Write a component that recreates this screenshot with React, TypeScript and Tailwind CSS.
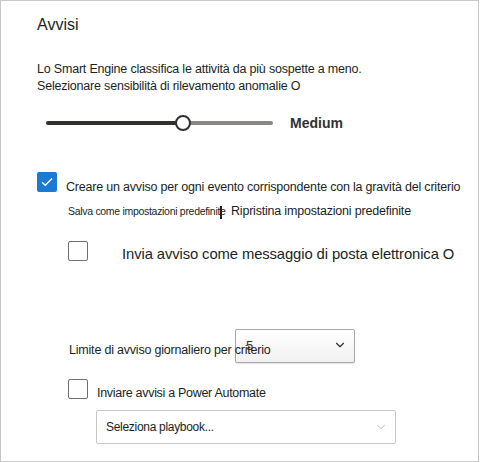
import { ChevronDown } from "lucide-react";

const font = { fontFamily: '"Liberation Sans", Arial, sans-serif' };

export default function App() {
  return (
    <div
      className="w-[479px] h-[462px] border border-[#c8c8c8] bg-white text-[#201f1e] overflow-hidden"
      style={font}
    >
      <div className="pl-[36px] pt-[14px]">
        {/* Title */}
        <h1 className="text-[16px] leading-[20px] text-[#201f1e]">Avvisi</h1>

        {/* Description */}
        <p className="mt-[26px] text-[12.5px] leading-[17px] tracking-[-0.2px]">
          Lo Smart Engine classifica le attività da più sospette a meno.
          <br />
          Selezionare sensibilità di rilevamento anomalie O
        </p>

        {/* Slider */}
        <div className="mt-[20px] flex items-center h-[16px]">
          <div className="ml-[9px] relative w-[227px] h-[16px] flex items-center">
            <div className="h-[4px] w-[137px] bg-[#323130] rounded-l-full" />
            <div className="h-[4px] flex-1 bg-[#8a8886] rounded-r-full" />
            <div className="absolute left-[129px] top-0 w-[16px] h-[16px] rounded-full bg-white border-2 border-[#323130]" />
          </div>
          <span className="ml-[17px] text-[14px] font-bold text-[#323130]">Medium</span>
        </div>

        {/* Checked checkbox */}
        <div className="mt-[41px] flex items-start">
          <div className="w-[20px] h-[20px] rounded-[2px] bg-[#1a7ad4] flex items-center justify-center">
            <svg width="12" height="10" viewBox="0 0 12 10" fill="none">
              <path d="M1 5.2 L4.3 8.3 L11 1.5" stroke="white" strokeWidth="1.3" />
            </svg>
          </div>
          <span className="ml-[9px] mt-[8px] text-[12.5px] leading-[15px] tracking-[-0.2px]">
            Creare un avviso per ogni evento corrispondente con la gravità del criterio
          </span>
        </div>

        {/* Save / restore defaults */}
        <div className="mt-[9px] ml-[31px] flex items-start h-[18px]">
          <span className="w-[152px] whitespace-nowrap text-[10.5px] leading-[13px] tracking-[-0.3px] mt-[1px]">
            Salva come impostazioni predefinite
          </span>
          <span className="w-[2px] h-[13px] bg-[#201f1e] mt-[2px]" />
          <span className="ml-[9px] text-[12.5px] leading-[15px] tracking-[-0.2px] whitespace-nowrap">
            Ripristina impostazioni predefinite
          </span>
        </div>

        {/* Email checkbox */}
        <div className="mt-[19px] ml-[31px] flex items-start h-[20px]">
          <div className="w-[20px] h-[20px] rounded-[2px] border border-[#6e6e6e] bg-white" />
          <span className="ml-[34px] mt-[4px] text-[14.8px] leading-[18px] tracking-[-0.1px] whitespace-nowrap">
            Invia avviso come messaggio di posta elettronica O
          </span>
        </div>

        {/* Daily limit */}
        <div className="mt-[68px] ml-[32px] flex items-start">
          <span className="relative z-10 w-[166px] mt-[14px] whitespace-nowrap text-[12.5px] leading-[15px] tracking-[-0.2px]">
            Limite di avviso giornaliero per criterio
          </span>
          <div className="w-[120px] h-[34px] border border-[#a8a8a8] rounded-[2px] bg-gradient-to-b from-white to-[#f1f1f1] shadow-[0_1px_1px_rgba(0,0,0,0.12)] flex items-start justify-between pl-[10px] pr-[7px] pt-[8px]">
            <span className="text-[13px] leading-[15px] text-[#323130]">5</span>
            <ChevronDown className="w-[14px] h-[14px] text-[#323130]" strokeWidth={2} />
          </div>
        </div>

        {/* Power Automate */}
        <div className="mt-[16px] ml-[31px] flex items-start">
          <div className="w-[20px] h-[20px] rounded-[2px] border border-[#6e6e6e] bg-white" />
          <span className="ml-[9px] mt-[7px] text-[12.5px] leading-[15px] tracking-[-0.3px]">
            Inviare avvisi a Power Automate
          </span>
        </div>

        <div className="mt-[9px] ml-[59px] w-[300px] h-[34px] border border-[#c8c8c8] rounded-[2px] flex items-center justify-between pl-[9px] pr-[7px]">
          <span className="text-[12px] leading-[15px] tracking-[-0.3px] mt-[1px]">Seleziona playbook...</span>
          <ChevronDown className="w-[14px] h-[14px] text-[#b3b3b3]" strokeWidth={1.5} />
        </div>
      </div>
    </div>
  );
}
